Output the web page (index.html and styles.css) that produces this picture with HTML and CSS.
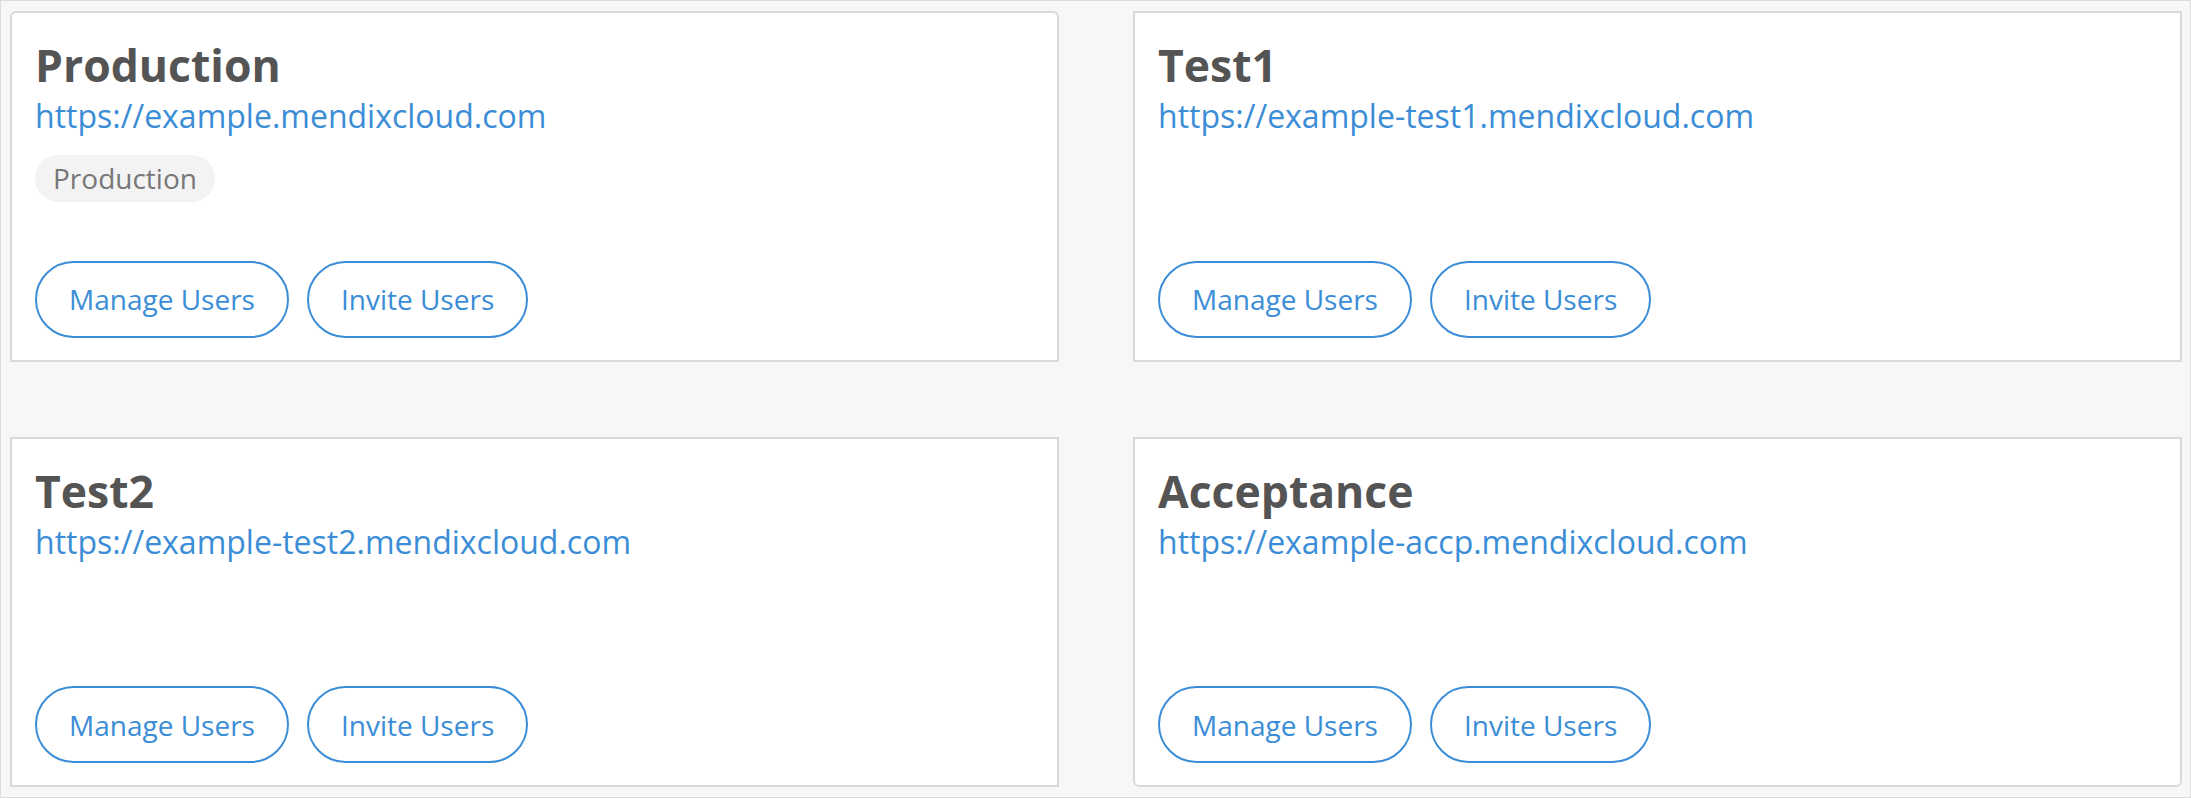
FILE: index.html
```html
<!DOCTYPE html>
<html lang="en">
<head>
<meta charset="utf-8">
<title>Environments</title>
<link rel="stylesheet" href="styles.css">
</head>
<body>
<div class="frame">
  <div class="grid">
    <section class="card card--top">
      <h2 class="card-title">Production</h2>
      <a class="card-url" href="#">https://example.mendixcloud.com</a>
      <div class="badge-row"><span class="badge">Production</span></div>
      <div class="actions">
        <button class="btn">Manage Users</button>
        <button class="btn">Invite Users</button>
      </div>
    </section>
    <section class="card">
      <h2 class="card-title">Test1</h2>
      <a class="card-url" href="#">https://example-test1.mendixcloud.com</a>
      <div class="actions">
        <button class="btn">Manage Users</button>
        <button class="btn">Invite Users</button>
      </div>
    </section>
    <section class="card">
      <h2 class="card-title">Test2</h2>
      <a class="card-url" href="#">https://example-test2.mendixcloud.com</a>
      <div class="actions">
        <button class="btn">Manage Users</button>
        <button class="btn">Invite Users</button>
      </div>
    </section>
    <section class="card card--bottom">
      <h2 class="card-title">Acceptance</h2>
      <a class="card-url" href="#">https://example-accp.mendixcloud.com</a>
      <div class="actions">
        <button class="btn">Manage Users</button>
        <button class="btn">Invite Users</button>
      </div>
    </section>
  </div>
</div>
</body>
</html>
```

FILE: styles.css
```css
* { box-sizing: border-box; }

html, body {
  margin: 0;
  padding: 0;
  background: #ffffff;
}

body {
  font-family: "Open Sans", "Noto Sans", "Liberation Sans", sans-serif;
}

.frame {
  width: 2191px;
  height: 798px;
  border: 1px solid #dcdcdc;
  background: #f7f7f7;
  padding: 10px 8px 10px 9px;
}

.grid {
  height: 100%;
  display: grid;
  grid-template-columns: 1fr 1fr;
  grid-template-rows: 1fr 1fr;
  column-gap: 74px;
  row-gap: 75px;
}

.card {
  display: flex;
  flex-direction: column;
  align-items: flex-start;
  background: #ffffff;
  border: 2px solid #d9d9d9;
  padding: 25px 23px 22px 23px;
}

.card--top { border-radius: 6px 6px 0 0; }
.card--bottom { border-radius: 0 0 6px 6px; }

.card-title {
  margin: 0;
  font-size: 44.5px;
  line-height: 54px;
  font-weight: 700;
  color: #545454;
}

.card-url {
  display: block;
  margin-top: 2px;
  font-size: 32px;
  line-height: 44px;
  color: #3a8dd6;
  text-decoration: none;
}

.badge-row {
  margin-top: 17px;
}

.badge {
  display: inline-block;
  height: 47px;
  line-height: 47px;
  padding: 0 18px;
  border-radius: 24px;
  background: #f3f3f3;
  color: #777777;
  font-size: 28px;
}

.actions {
  margin-top: auto;
  display: flex;
  gap: 18px;
}

.btn {
  height: 77px;
  padding: 0 32px;
  border: 2px solid #3a8dd6;
  border-radius: 39px;
  background: #ffffff;
  color: #3a8dd6;
  font-family: "Open Sans", "Noto Sans", "Liberation Sans", sans-serif;
  font-size: 28px;
  line-height: 38px;
  cursor: pointer;
}
```
